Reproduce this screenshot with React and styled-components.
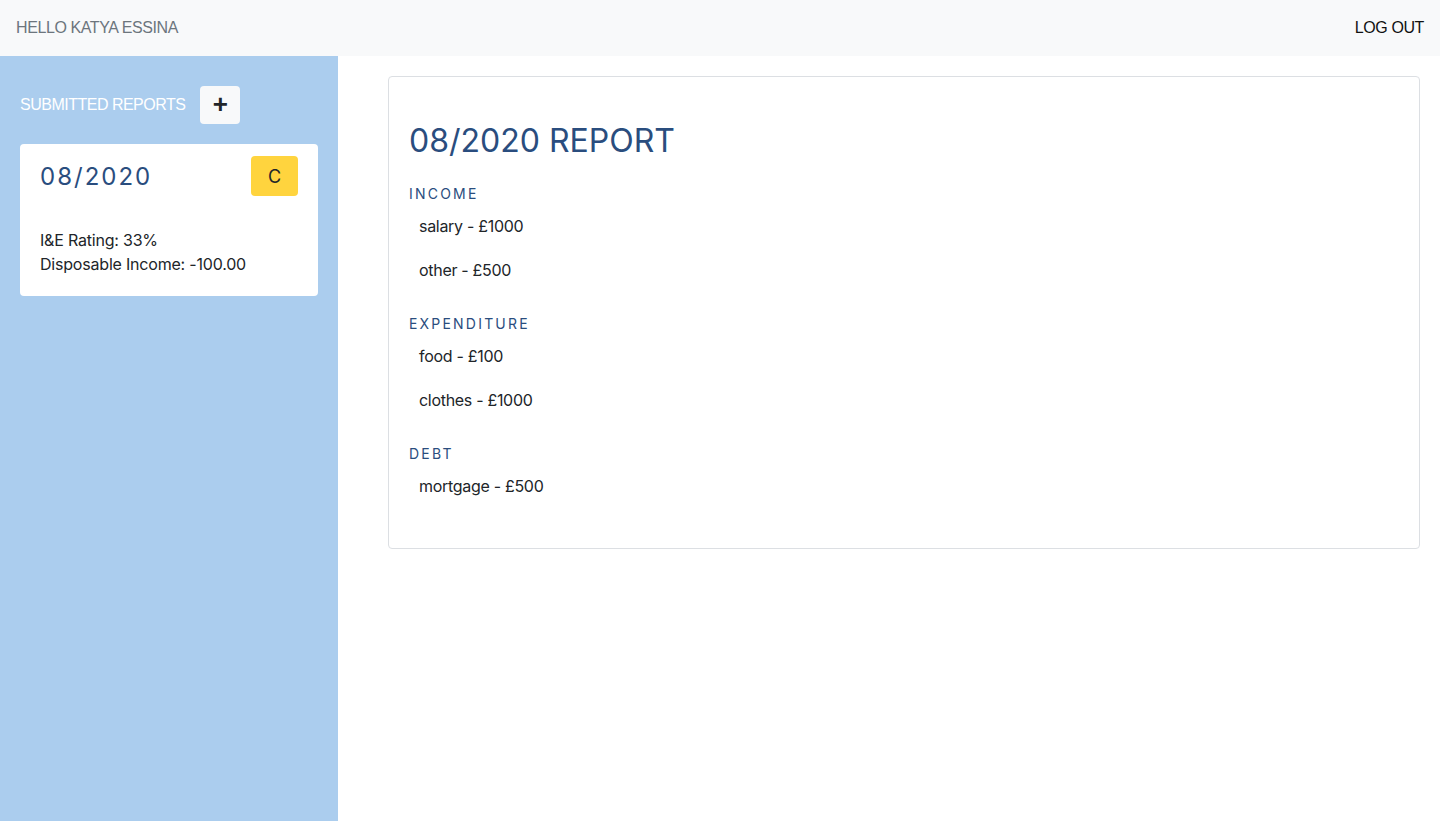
import styled, { createGlobalStyle } from "styled-components";

const GlobalStyle = createGlobalStyle`
  html, body {
    margin: 0;
    padding: 0;
    background: #fff;
    font-family: Inter, "Noto Sans", "Liberation Sans", sans-serif;
    color: #212529;
  }
  * { box-sizing: border-box; }
`;

const Page = styled.div`
  display: flex;
  flex-direction: column;
  min-height: 821px;
`;

const Navbar = styled.nav`
  height: 56px;
  background: #f8f9fa;
  display: flex;
  align-items: center;
  justify-content: space-between;
  padding: 0 16px;
  font-family: "Liberation Sans", Arial, sans-serif;
  font-size: 16px;
  letter-spacing: -0.4px;
`;

const NavText = styled.span`
  color: ${({ muted }) => (muted ? "#6c757d" : "#111")};
  cursor: ${({ muted }) => (muted ? "default" : "pointer")};
`;

const Body = styled.div`
  flex: 1;
  display: grid;
  grid-template-columns: 338px 1fr;
`;

const Sidebar = styled.aside`
  background: #abcdee;
  padding: 30px 20px 20px;
  display: flex;
  flex-direction: column;
  gap: 20px;
`;

const SidebarHeader = styled.div`
  display: flex;
  align-items: center;
  gap: 15px;
  color: #fff;
  font-family: "Liberation Sans", Arial, sans-serif;
  font-size: 16px;
  letter-spacing: -0.5px;
`;

const AddButton = styled.button`
  width: 40px;
  height: 38px;
  border: 0;
  border-radius: 4px;
  background: #f8f9fa;
  color: #212529;
  font-size: 26px;
  font-weight: 700;
  line-height: 1;
  display: flex;
  align-items: center;
  justify-content: center;
  padding: 0 0 2px;
  cursor: pointer;
  font-family: "Liberation Sans", Arial, sans-serif;
`;

const ReportCard = styled.div`
  background: #fff;
  border-radius: 4px;
  padding: 12px 20px 20px;
`;

const CardTop = styled.div`
  display: flex;
  align-items: center;
  justify-content: space-between;
  margin-bottom: 32px;
`;

const CardDate = styled.div`
  font-size: 24px;
  letter-spacing: 2px;
  color: #2a4d7e;
`;

const Grade = styled.span`
  width: 47px;
  height: 40px;
  border-radius: 4px;
  background: #ffd43e;
  display: flex;
  align-items: center;
  justify-content: center;
  font-size: 18px;
  color: #212529;
`;

const CardLine = styled.div`
  font-size: 16px;
  line-height: 24px;
  letter-spacing: -0.2px;
`;

const Main = styled.main`
  padding: 20px 20px 20px 50px;
`;

const ReportPanel = styled.section`
  border: 1px solid #dcdfe3;
  border-radius: 4px;
  padding: 45px 20px 19px;
`;

const ReportTitle = styled.h2`
  margin: 0 0 23px;
  font-size: 32px;
  font-weight: 400;
  line-height: 38px;
  letter-spacing: 0px;
  color: #2a4d7e;
`;

const Section = styled.div`
  margin-bottom: 21px;
`;

const SectionLabel = styled.h3`
  margin: 0;
  font-size: 14px;
  font-weight: 400;
  line-height: 21px;
  letter-spacing: 2.2px;
  color: #2a4d7e;
`;

const Item = styled.div`
  padding: 10px;
  font-size: 16px;
  line-height: 24px;
  letter-spacing: -0.3px;
  color: #212529;
`;

const sections = [
  { label: "INCOME", items: ["salary - £1000", "other - £500"] },
  { label: "EXPENDITURE", items: ["food - £100", "clothes - £1000"] },
  { label: "DEBT", items: ["mortgage - £500"] },
];

export default function App() {
  return (
    <>
      <GlobalStyle />
      <Page>
        <Navbar>
          <NavText muted>HELLO KATYA ESSINA</NavText>
          <NavText>LOG OUT</NavText>
        </Navbar>
        <Body>
          <Sidebar>
            <SidebarHeader>
              SUBMITTED REPORTS
              <AddButton>+</AddButton>
            </SidebarHeader>
            <ReportCard>
              <CardTop>
                <CardDate>08/2020</CardDate>
                <Grade>C</Grade>
              </CardTop>
              <CardLine>I&amp;E Rating: 33%</CardLine>
              <CardLine>Disposable Income: -100.00</CardLine>
            </ReportCard>
          </Sidebar>
          <Main>
            <ReportPanel>
              <ReportTitle>08/2020 REPORT</ReportTitle>
              {sections.map((s) => (
                <Section key={s.label}>
                  <SectionLabel>{s.label}</SectionLabel>
                  {s.items.map((it) => (
                    <Item key={it}>{it}</Item>
                  ))}
                </Section>
              ))}
            </ReportPanel>
          </Main>
        </Body>
      </Page>
    </>
  );
}
